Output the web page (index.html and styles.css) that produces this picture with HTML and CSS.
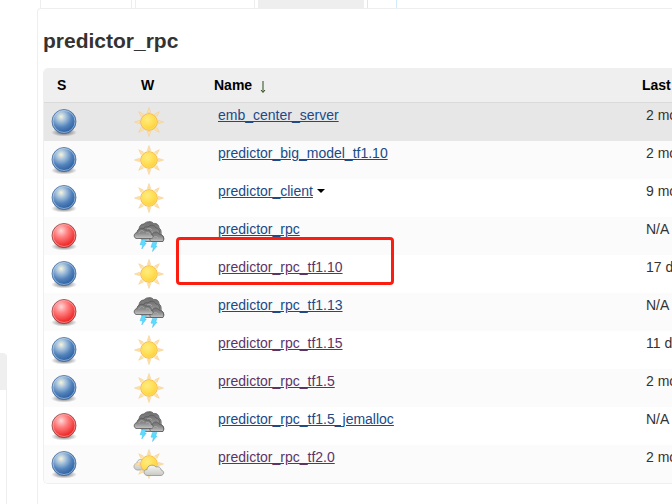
FILE: index.html
```
<!DOCTYPE html>
<html lang="en">
<head>
<meta charset="utf-8">
<title>predictor_rpc</title>
<link rel="stylesheet" href="styles.css">
</head>
<body>
<svg class="defs" aria-hidden="true">
  <defs>
    <radialGradient id="blue" cx=".38" cy=".3" r=".68"><stop offset="0" stop-color="#f5f5dc"/><stop offset=".3" stop-color="#a5c1dc"/><stop offset=".65" stop-color="#5383bb"/><stop offset="1" stop-color="#2d60a3"/></radialGradient>
    <radialGradient id="red" cx=".38" cy=".3" r=".68"><stop offset="0" stop-color="#ffd8d8"/><stop offset=".4" stop-color="#ff8080"/><stop offset="1" stop-color="#ed2020"/></radialGradient>
    <radialGradient id="shade"><stop offset="0" stop-color="#000" stop-opacity=".6"/><stop offset="1" stop-color="#000" stop-opacity="0"/></radialGradient>
    <radialGradient id="gold" cx=".4" cy=".35" r=".7"><stop offset="0" stop-color="#ffec80"/><stop offset=".6" stop-color="#ffdd50"/><stop offset="1" stop-color="#fdc92b"/></radialGradient>
    <linearGradient id="dark" x2="0" y2="1"><stop offset="0" stop-color="#6f6f6f"/><stop offset=".5" stop-color="#8c8c8c"/><stop offset="1" stop-color="#c4c4c4"/></linearGradient>
    <linearGradient id="light" x2="0" y2="1"><stop offset="0" stop-color="#f6f6f4"/><stop offset="1" stop-color="#c8c8c4"/></linearGradient>
    <symbol id="ball-blue" viewBox="0 0 32 32">
      <ellipse cx="16" cy="26.500" rx="13" ry="4" fill="url(#shade)"/>
      <circle cx="16" cy="15.500" r="12" fill="url(#blue)" stroke="#4a70a0" stroke-width=".8"/>
      <circle cx="16" cy="15.500" r="11" fill="none" stroke="#c7daed" stroke-opacity=".6"/>
    </symbol>
    <symbol id="ball-red" viewBox="0 0 32 32">
      <ellipse cx="16" cy="26.500" rx="13" ry="4" fill="url(#shade)"/>
      <circle cx="16" cy="15.500" r="12" fill="url(#red)" stroke="#8d4444" stroke-width=".8"/>
      <circle cx="16" cy="15.500" r="11" fill="none" stroke="#ffb7b7" stroke-opacity=".6"/>
    </symbol>
    <symbol id="sun" viewBox="0 0 32 32">
      <g fill="#fde3a6" stroke="#f3c98a" stroke-width=".5">
        <path id="rays" d="M16 1.500l1.700 5h-3.400zM16 30.500l1.700-5h-3.400zM1.500 16l5-1.700v3.400zM30.500 16l-5-1.700v3.400z"/>
        <use href="#rays" transform="rotate(45 16 16)"/>
      </g>
      <circle cx="16" cy="16" r="8.300" fill="url(#gold)" stroke="#f7b94a"/>
      <circle cx="16" cy="16" r="7.300" fill="none" stroke="#ffe36c" stroke-opacity=".7"/>
    </symbol>
    <symbol id="storm" viewBox="0 0 32 32">
      <g fill="url(#dark)" stroke="#585858" stroke-width=".8">
        <path d="M7 18C4 16 4 12 6 10C6 6 8 4 11 4C12 1.500 19 .5 20.500 3.500C24 3 26 5 26 8C28 9 28.500 12 28 14.500C31.500 16 31.500 21 29 21.500H12z"/>
        <path d="M10 12c-1-4 2-6 5-5c2-3 7-2 8 1c3 0 4 3 3 6l-8 3z"/>
        <path d="M18 21.500c-2-2-2-6 1-6.500c1-4 6-4 7.500-.5c4 0 5 4 3.500 7z"/>
        <path d="M3 18.500c-3-1.500-2-5.500 1-6c0-4 6-6 8.500-2.500c4-.5 6 2 6 4.500c2.500 1 2 4 0 4z"/>
      </g>
      <path d="M6 13c1-3 4-3 5-1M20 18c1-2 4-2 5 0M14 9c2-1 4-1 5 1M13 13c2-1 4 0 4 2" fill="none" stroke="#b4b4b4" stroke-width=".7"/>
      <path d="M9 19.500h4.500l-2 3.500h1.800l-4.500 6 .8-4.300H7zM19.500 22.500h4.500l-1.500 3.500h1.500l-4.500 5.500 .8-4.300h-2.300z" fill="#5cdcff" stroke="#35b2e6" stroke-width=".4"/>
    </symbol>
    <symbol id="partly" viewBox="0 0 32 32">
      <path d="M4 22c-4-1-4-6 0-7c0-4 6-5 8-1l2 8z" fill="url(#light)" stroke="#a0a0a0" stroke-width=".8"/>
      <use href="#sun" width="32" height="32"/>
      <path d="M14 27.500c-4-1-4-6 0-6c0-4 6-6 9-2.500c3-1 5 1 5 3c4 1 3 5 0 5.500z" fill="url(#light)" stroke="#929292" stroke-width=".8"/>
    </symbol>
  </defs>
</svg>
<div class="page">
  <aside class="side"><div class="side-head"></div></aside>
  <div class="content">
    <nav class="tabs" aria-label="Views">
      <span class="tab first"></span><span class="tab second"></span><span class="tab active"></span><span class="tab add"></span>
    </nav>
    <main class="panel">
      <h1>predictor_rpc</h1>
      <div class="frame">
        <table>
          <colgroup><col class="c-s"><col class="c-w"><col class="c-name"><col></colgroup>
          <thead><tr><th>S</th><th>W</th><th>Name <svg class="sort" viewBox="0 0 8 12" role="img" aria-label="ascending"><path d="M4 0V11M2 9L4 11.500L6 9"/></svg></th><th>Last</th></tr></thead>
          <tbody>
            <tr class="hover"><td><svg><use href="#ball-blue"/></svg></td><td><svg><use href="#sun"/></svg></td><td><a href="#">emb_center_server</a></td><td>2 mo</td></tr>
            <tr><td><svg><use href="#ball-blue"/></svg></td><td><svg><use href="#sun"/></svg></td><td><a href="#">predictor_big_model_tf1.10</a></td><td>2 mo</td></tr>
            <tr><td><svg><use href="#ball-blue"/></svg></td><td><svg><use href="#sun"/></svg></td><td><a href="#">predictor_client</a><span class="caret"></span></td><td>9 mo</td></tr>
            <tr><td><svg><use href="#ball-red"/></svg></td><td><svg><use href="#storm"/></svg></td><td><a href="#">predictor_rpc</a></td><td>N/A</td></tr>
            <tr><td><svg><use href="#ball-blue"/></svg></td><td><svg><use href="#sun"/></svg></td><td class="marked"><a class="seen" href="#">predictor_rpc_tf1.10</a></td><td>17 d</td></tr>
            <tr><td><svg><use href="#ball-red"/></svg></td><td><svg><use href="#storm"/></svg></td><td><a href="#">predictor_rpc_tf1.13</a></td><td>N/A</td></tr>
            <tr><td><svg><use href="#ball-blue"/></svg></td><td><svg><use href="#sun"/></svg></td><td><a class="seen" href="#">predictor_rpc_tf1.15</a></td><td>11 d</td></tr>
            <tr><td><svg><use href="#ball-blue"/></svg></td><td><svg><use href="#sun"/></svg></td><td><a class="seen" href="#">predictor_rpc_tf1.5</a></td><td>2 mo</td></tr>
            <tr><td><svg><use href="#ball-red"/></svg></td><td><svg><use href="#storm"/></svg></td><td><a href="#">predictor_rpc_tf1.5_jemalloc</a></td><td>N/A</td></tr>
            <tr><td><svg><use href="#ball-blue"/></svg></td><td><svg><use href="#partly"/></svg></td><td><a class="seen" href="#">predictor_rpc_tf2.0</a></td><td>2 mo</td></tr>
          </tbody>
        </table>
      </div>
    </main>
  </div>
</div>
</body>
</html>
```
FILE: styles.css
```
*, *::after { box-sizing: border-box; }
body {
  margin: 0;
  background: #fff;
  color: #333;
  font: 14px/18px "Liberation Sans", Arial, sans-serif;
  overflow: hidden;
}
.defs { position: absolute; width: 0; height: 0; }
.page { display: flex; min-height: 100vh; }
.side {
  flex: 0 0 7px;
  margin-top: 353px;
  border-right: 1px solid #eee;
  border-top-right-radius: 4px;
  overflow: hidden;
}
.side-head { height: 37px; background: #efefef; }
.content {
  flex: 1;
  min-width: 0;
  margin-left: 30px;
  display: flex;
  flex-direction: column;
}
.tabs { display: flex; gap: 3px; height: 8px; padding-left: 3px; }
.tab { border: solid #eee; border-width: 0 1px; }
.first { width: 92px; }
.second { width: 120px; }
.active { width: 106px; background: #eee; }
.add { width: 30px; border-color: #d0ebfa; }
.panel {
  flex: 1;
  border: solid #eee;
  border-width: 1px 0 0 1px;
  border-top-left-radius: 4px;
  padding: 20px 0 20px 5px;
}
h1 { margin: 0 0 15px; font-size: 21px; line-height: 24px; color: #333; }
.frame {
  border: solid #efefef;
  border-width: 0 0 1px 1px;
  border-radius: 5px 0 0 5px;
  overflow: hidden;
}
table { width: 100%; table-layout: fixed; border-collapse: separate; border-spacing: 0; }
.c-s { width: 84px; }
.c-w { width: 73px; }
.c-name { width: 428px; }
th {
  height: 35px;
  padding: 0 0 0 13px;
  background: #efefef;
  border-bottom: 1px solid #dadada;
  color: #000;
  text-align: left;
  white-space: nowrap;
}
.sort {
  width: 8px;
  height: 12px;
  margin-left: 3px;
  vertical-align: -3px;
  fill: none;
  stroke: #2c4a1c;
}
td {
  height: 38px;
  padding: 3px 0 0 17px;
  vertical-align: top;
  white-space: nowrap;
}
td:nth-child(-n+2) { padding: 3px 0 0 4px; }
td:nth-child(2) { padding-left: 5px; }
td svg { display: block; width: 32px; height: 32px; }
tbody tr:nth-child(even) { background: #fbfbfb; }
tbody .hover { background: #e7e7e7; }
a { color: #204a87; }
.seen { color: #5c3566; }
.caret {
  display: inline-block;
  margin-left: 4px;
  vertical-align: 3px;
  border: 4px solid transparent;
  border-top-color: #000;
  border-bottom: 0;
}
.marked { position: relative; }
.marked::after {
  content: "";
  position: absolute;
  left: -25px;
  top: -18px;
  width: 218px;
  height: 48px;
  border: 3px solid #fb1d10;
  border-radius: 4px;
}
```
